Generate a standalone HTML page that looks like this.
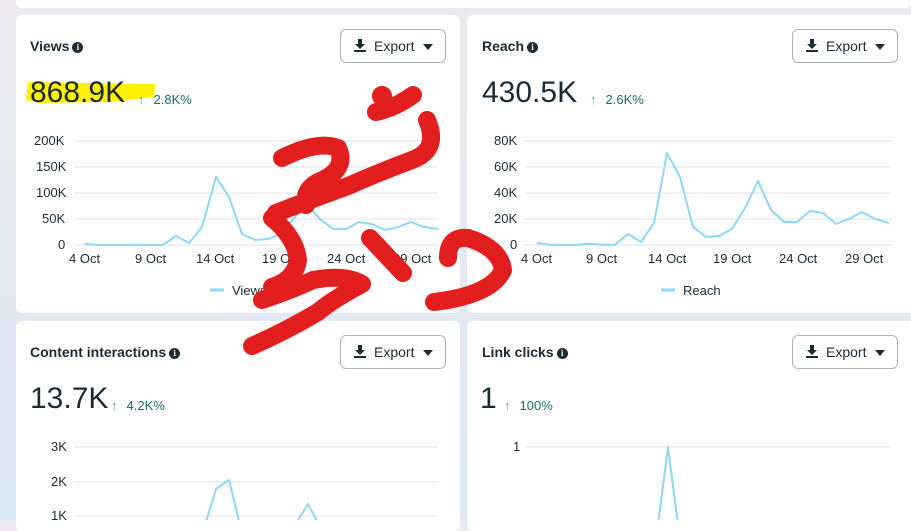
<!DOCTYPE html>
<html><head><meta charset="utf-8"><style>
*{margin:0;padding:0;box-sizing:border-box}
body{width:911px;height:520px;overflow:hidden;position:relative;font-family:"Liberation Sans",sans-serif;background:linear-gradient(180deg,#ece9ef 0%,#e6e9f2 40%,#dde9f6 100%)}
.card{position:absolute;background:#fff;border-radius:6px}
.t{position:absolute;font-weight:bold;font-size:14px;color:#1c2b33}
.t i{display:inline-block;width:11px;height:11px;border-radius:50%;background:#1c2b33;color:#fff;font-style:normal;font-size:9px;line-height:11px;text-align:center;vertical-align:1px;margin-left:3px;font-family:"Liberation Serif",serif}
.btn{position:absolute;width:106px;height:34px;border:1px solid #aab4c0;border-radius:6px;font-size:14px;color:#1c2b33}
.btn span{position:absolute;left:33px;top:8px}
.big{position:absolute;font-size:30px;color:#1c2b33}
.pct{position:absolute;font-size:13px;color:#1d6a6a}
.pct b{color:#5aa38f;font-weight:normal;margin-right:9px}
.ax{position:absolute;font-size:13px;color:#1c2b33}
</style></head><body>
<div class="card" style="left:16px;top:-10px;width:895px;height:18px"></div>
<div class="card" style="left:16px;top:15px;width:444px;height:298px"></div>
<div class="card" style="left:467px;top:15px;width:450px;height:298px"></div>
<div class="card" style="left:16px;top:321px;width:444px;height:210px"></div>
<div class="card" style="left:467px;top:321px;width:450px;height:210px"></div>

<svg width="911" height="520" style="position:absolute;left:0;top:0">
<polygon points="28,82 155,84 154,97 112,102 40,103 26,100" fill="#fff200"/>
<g stroke="#e3e6ea" stroke-width="1.3">
<line x1="74" x2="438" y1="141" y2="141"/><line x1="74" x2="438" y1="167" y2="167"/><line x1="74" x2="438" y1="193" y2="193"/><line x1="74" x2="438" y1="219" y2="219"/><line x1="74" x2="438" y1="245" y2="245"/>
<line x1="525" x2="891" y1="141" y2="141"/><line x1="525" x2="891" y1="167" y2="167"/><line x1="525" x2="891" y1="193" y2="193"/><line x1="525" x2="891" y1="219" y2="219"/><line x1="525" x2="891" y1="245" y2="245"/>
<line x1="74" x2="438" y1="447" y2="447"/><line x1="74" x2="438" y1="482" y2="482"/><line x1="74" x2="438" y1="516" y2="516"/>
<line x1="525" x2="891" y1="447" y2="447"/>
</g>
<g fill="none" stroke="#8fd6fb" stroke-width="2" stroke-linejoin="round">
<polyline points="85,243.7 98,245 111,245 124,245 137,244.7 150,245 163,245 176,236 189,243 202,227 216,177 229,197 242,234 255,240 268,239 281,234 294,218 307,205 320,219 333,229 346,229 359,222 372,224 385,230 398,227 411,222 424,227 438,229"/>
<polyline points="537,243 550,244.7 563,245 576,245 589,243.7 602,244.7 615,244.7 628,234 641,242 654,223 667,153 680,177 693,227 706,237 719,236 732,229 745,208 758,181 771,210 784,222 797,222 810,211 823,213 836,224 849,219 862,212 875,219 889,223"/>
<polyline points="205,525 216,489 229,480 240,525"/>
<polyline points="295,525 308,504 319,525"/>
<polyline points="658,525 668,447 678,525"/>
<line x1="210" y1="290" x2="224" y2="290" stroke-width="3"/>
<line x1="661" y1="290" x2="675" y2="290" stroke-width="3"/>
</g>
</svg>

<div class="t" style="left:30px;top:38px">Views<i>i</i></div>
<div class="t" style="left:482px;top:38px">Reach<i>i</i></div>
<div class="t" style="left:30px;top:344px">Content interactions<i>i</i></div>
<div class="t" style="left:482px;top:344px">Link clicks<i>i</i></div>

<div class="btn" style="left:340px;top:29px"><svg style="position:absolute;left:13px;top:9px" width="12" height="14"><path d="M4 0h4v5h3l-5 5-5-5h3z M0 11h12v2H0z" fill="#1c2b33"/></svg><span>Export</span><svg style="position:absolute;left:82px;top:14px" width="10" height="6"><path d="M0 0h10L5 6z" fill="#1c2b33"/></svg></div>
<div class="btn" style="left:792px;top:29px"><svg style="position:absolute;left:13px;top:9px" width="12" height="14"><path d="M4 0h4v5h3l-5 5-5-5h3z M0 11h12v2H0z" fill="#1c2b33"/></svg><span>Export</span><svg style="position:absolute;left:82px;top:14px" width="10" height="6"><path d="M0 0h10L5 6z" fill="#1c2b33"/></svg></div>
<div class="btn" style="left:340px;top:335px"><svg style="position:absolute;left:13px;top:9px" width="12" height="14"><path d="M4 0h4v5h3l-5 5-5-5h3z M0 11h12v2H0z" fill="#1c2b33"/></svg><span>Export</span><svg style="position:absolute;left:82px;top:14px" width="10" height="6"><path d="M0 0h10L5 6z" fill="#1c2b33"/></svg></div>
<div class="btn" style="left:792px;top:335px"><svg style="position:absolute;left:13px;top:9px" width="12" height="14"><path d="M4 0h4v5h3l-5 5-5-5h3z M0 11h12v2H0z" fill="#1c2b33"/></svg><span>Export</span><svg style="position:absolute;left:82px;top:14px" width="10" height="6"><path d="M0 0h10L5 6z" fill="#1c2b33"/></svg></div>

<div class="big" style="left:30px;top:76px">868.9K</div><div class="pct" style="left:138px;top:92px"><b>↑</b>2.8K%</div>
<div class="big" style="left:482px;top:76px">430.5K</div><div class="pct" style="left:590px;top:92px"><b>↑</b>2.6K%</div>
<div class="big" style="left:30px;top:382px">13.7K</div><div class="pct" style="left:111px;top:398px"><b>↑</b>4.2K%</div>
<div class="big" style="left:480px;top:382px">1</div><div class="pct" style="left:504px;top:398px"><b>↑</b>100%</div>

<div class="ax" style="left:34px;top:133px">200K</div><div class="ax" style="left:36px;top:159px">150K</div><div class="ax" style="left:36px;top:185px">100K</div><div class="ax" style="left:42px;top:211px">50K</div><div class="ax" style="left:58px;top:237px">0</div>
<div class="ax" style="left:69px;top:251px">4 Oct</div><div class="ax" style="left:135px;top:251px">9 Oct</div><div class="ax" style="left:196px;top:251px">14 Oct</div><div class="ax" style="left:262px;top:251px">19 Oct</div><div class="ax" style="left:327px;top:251px">24 Oct</div><div class="ax" style="left:393px;top:251px">29 Oct</div>
<div class="ax" style="left:232px;top:283px">Views</div>
<div class="ax" style="left:494px;top:133px">80K</div><div class="ax" style="left:494px;top:159px">60K</div><div class="ax" style="left:494px;top:185px">40K</div><div class="ax" style="left:494px;top:211px">20K</div><div class="ax" style="left:510px;top:237px">0</div>
<div class="ax" style="left:521px;top:251px">4 Oct</div><div class="ax" style="left:586px;top:251px">9 Oct</div><div class="ax" style="left:648px;top:251px">14 Oct</div><div class="ax" style="left:713px;top:251px">19 Oct</div><div class="ax" style="left:779px;top:251px">24 Oct</div><div class="ax" style="left:845px;top:251px">29 Oct</div>
<div class="ax" style="left:683px;top:283px">Reach</div>
<div class="ax" style="left:51px;top:439px">3K</div><div class="ax" style="left:51px;top:474px">2K</div><div class="ax" style="left:51px;top:508px">1K</div>
<div class="ax" style="left:513px;top:439px">1</div>

<svg width="911" height="520" style="position:absolute;left:0;top:0">
<g fill="none" stroke="#e31e1e" stroke-width="18" stroke-linecap="round" stroke-linejoin="round">
<circle cx="382" cy="96" r="6" fill="#e31e1e" stroke-width="8"/>
<path d="M376 112 Q395 108 413 95"/>
<path d="M427 120 Q440 150 412 160 Q380 172 348 186 Q315 198 276 213"/>
<path d="M282 158 Q318 140 338 148 Q348 170 318 182 Q303 190 306 205"/>
<path d="M272 218 Q296 238 298 260 Q295 280 272 287"/>
<path d="M262 300 Q292 290 313 280 Q345 274 362 284 Q332 300 318 312 Q288 330 252 346"/>
<path d="M370 238 L403 273"/>
<path d="M448 258 Q448 236 468 238 Q500 248 503 270 Q492 295 434 302"/>
</g>
</svg>
</body></html>
